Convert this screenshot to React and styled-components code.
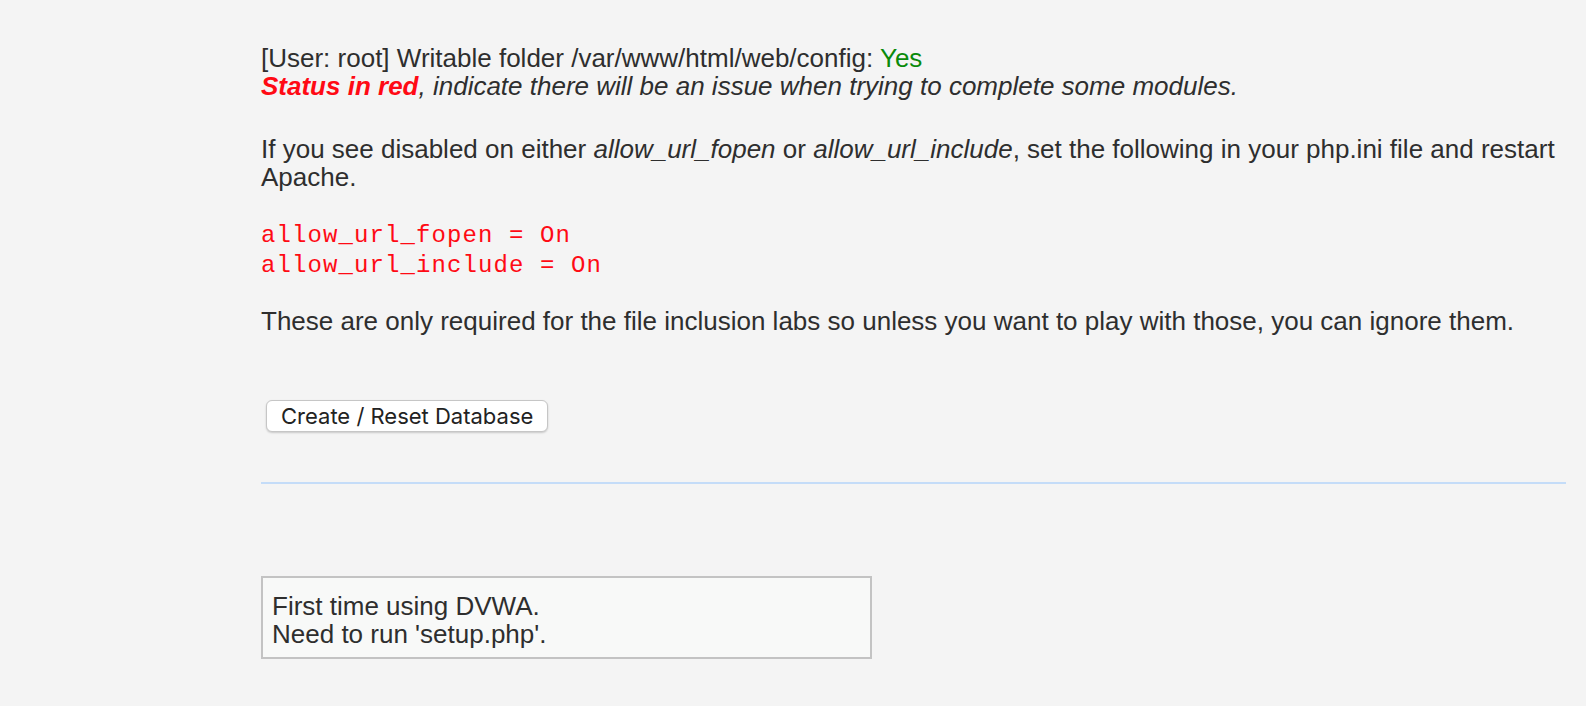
import React from 'react';
import styled, { createGlobalStyle } from 'styled-components';

const GlobalStyle = createGlobalStyle`
  html, body {
    margin: 0;
    padding: 0;
    background: #f4f4f4;
  }
  body {
    font-family: "Liberation Sans", Arial, Helvetica, sans-serif;
    color: #2e2e2e;
    font-size: 26px;
  }
`;

const Main = styled.main`
  padding: 44px 20px 40px 261px;
`;

const Para = styled.p`
  margin: 0 0 ${(p) => p.$gap || 0}px;
  line-height: 28.3px;
`;

const Yes = styled.span`
  color: #0a8a0a;
`;

const Alert = styled.span`
  color: #ff0a14;
  font-weight: bold;
`;

const Code = styled.pre`
  margin: 0 0 25px;
  font-family: "Liberation Mono", "Courier New", monospace;
  font-size: 24px;
  letter-spacing: 1.1px;
  line-height: 30.3px;
  color: #ff0a14;
`;

const Form = styled.form`
  margin: 0;
  padding: 0 0 0 5px;
`;

const Button = styled.button`
  font-family: Inter, "Noto Sans", sans-serif;
  font-size: 22px;
  color: #222;
  background: #fff;
  border: 1px solid #c6c6c6;
  border-radius: 6px;
  box-shadow: 0 1px 2px rgba(0, 0, 0, 0.18);
  height: 32px;
  padding: 0 14px;
`;

const Rule = styled.hr`
  border: none;
  border-top: 2px solid #c4dcf8;
  margin: 50px 0 0;
`;

const Notice = styled.div`
  margin-top: 92px;
  width: 586px;
  border: 2px solid #c3c3c3;
  background: #f8f9f8;
  padding: 14px 12px 8px 9px;
  line-height: 28.3px;
`;

export default function App() {
  return (
    <>
      <GlobalStyle />
      <Main>
        <Para $gap={34}>
          [User: root] Writable folder /var/www/html/web/config: <Yes>Yes</Yes>
          <br />
          <i>
            <Alert>Status in red</Alert>, indicate there will be an issue when trying to complete some modules.
          </i>
        </Para>
        <Para $gap={30}>
          If you see disabled on either <i>allow_url_fopen</i> or <i>allow_url_include</i>, set the following in
          your php.ini file and restart Apache.
        </Para>
        <Code>{'allow_url_fopen = On\nallow_url_include = On'}</Code>
        <Para $gap={65}>
          These are only required for the file inclusion labs so unless you want to play with those, you can ignore
          them.
        </Para>
        <Form onSubmit={(e) => e.preventDefault()}>
          <Button type="submit">Create / Reset Database</Button>
        </Form>
        <Rule />
        <Notice>
          First time using DVWA.
          <br />
          Need to run 'setup.php'.
        </Notice>
      </Main>
    </>
  );
}
